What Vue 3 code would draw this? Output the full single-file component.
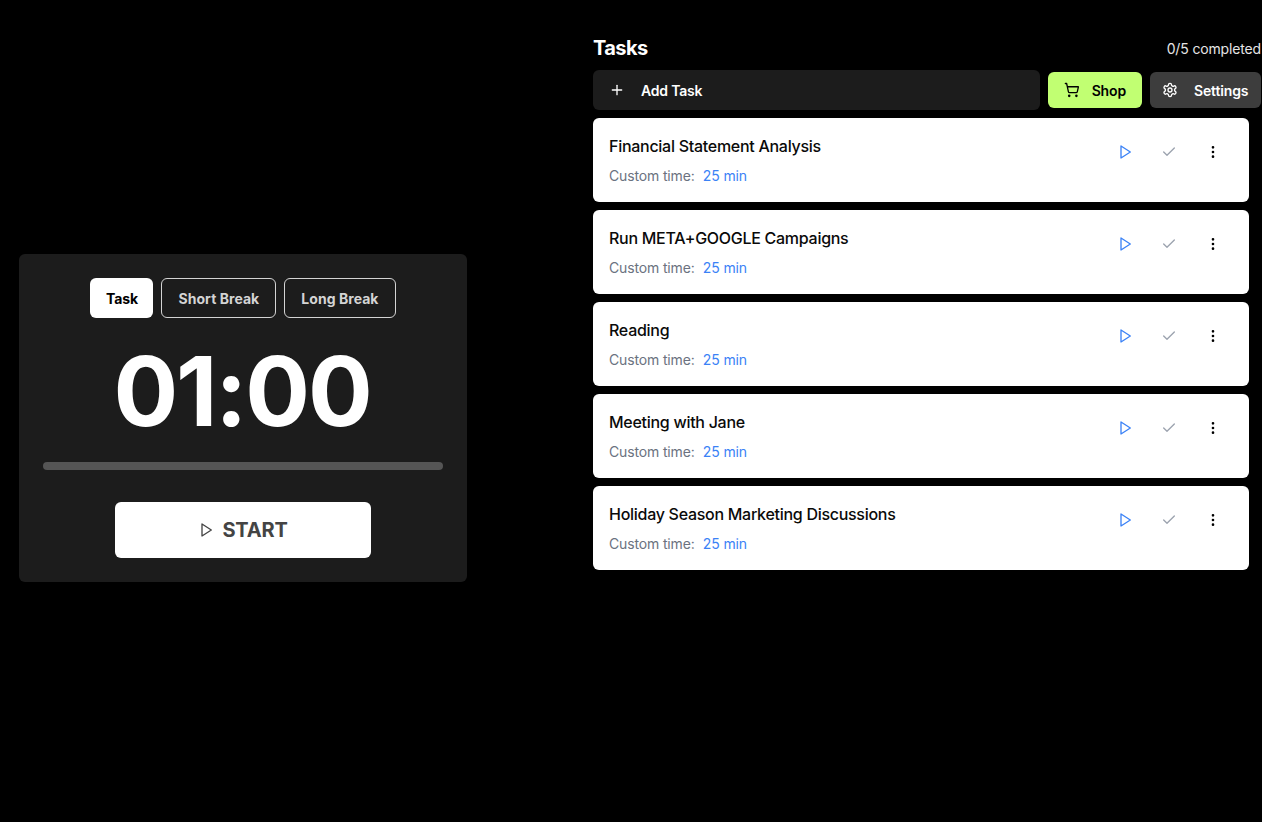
<script setup>
const modes = [
  { label: 'Task', active: true },
  { label: 'Short Break', active: false },
  { label: 'Long Break', active: false }
]

const tasks = [
  'Financial Statement Analysis',
  'Run META+GOOGLE Campaigns',
  'Reading',
  'Meeting with Jane',
  'Holiday Season Marketing Discussions'
]
</script>

<template>
  <div class="page">
    <section class="left">
      <div class="timer">
        <div class="modes">
          <button v-for="m in modes" :key="m.label" class="mode" :class="{ active: m.active }">
            {{ m.label }}
          </button>
        </div>
        <div class="time">01:00</div>
        <div class="progress"></div>
        <button class="start">
          <svg width="16" height="16" viewBox="0 0 24 24" fill="none" stroke="currentColor" stroke-width="2" stroke-linecap="round" stroke-linejoin="round">
            <polygon points="6 3 20 12 6 21 6 3" />
          </svg>
          START
        </button>
      </div>
    </section>

    <section class="right">
      <header class="head">
        <h2>Tasks</h2>
        <span class="count">0/5 completed</span>
      </header>

      <div class="toolbar">
        <button class="add">
          <svg width="16" height="16" viewBox="0 0 24 24" fill="none" stroke="currentColor" stroke-width="2" stroke-linecap="round">
            <path d="M5 12h14" />
            <path d="M12 5v14" />
          </svg>
          Add Task
        </button>
        <button class="shop">
          <svg width="16" height="16" viewBox="0 0 24 24" fill="none" stroke="currentColor" stroke-width="2" stroke-linecap="round" stroke-linejoin="round">
            <circle cx="8" cy="21" r="1" />
            <circle cx="19" cy="21" r="1" />
            <path d="M2.05 2.05h2l2.66 12.42a2 2 0 0 0 2 1.58h9.78a2 2 0 0 0 1.95-1.57l1.65-7.43H5.12" />
          </svg>
          Shop
        </button>
        <button class="settings">
          <svg width="16" height="16" viewBox="0 0 24 24" fill="none" stroke="currentColor" stroke-width="2" stroke-linecap="round" stroke-linejoin="round">
            <path d="M12.22 2h-.44a2 2 0 0 0-2 2v.18a2 2 0 0 1-1 1.73l-.43.25a2 2 0 0 1-2 0l-.15-.08a2 2 0 0 0-2.73.73l-.22.38a2 2 0 0 0 .73 2.73l.15.1a2 2 0 0 1 1 1.72v.51a2 2 0 0 1-1 1.74l-.15.09a2 2 0 0 0-.73 2.73l.22.38a2 2 0 0 0 2.73.73l.15-.08a2 2 0 0 1 2 0l.43.25a2 2 0 0 1 1 1.73V20a2 2 0 0 0 2 2h.44a2 2 0 0 0 2-2v-.18a2 2 0 0 1 1-1.73l.43-.25a2 2 0 0 1 2 0l.15.08a2 2 0 0 0 2.73-.73l.22-.39a2 2 0 0 0-.73-2.73l-.15-.08a2 2 0 0 1-1-1.74v-.5a2 2 0 0 1 1-1.74l.15-.09a2 2 0 0 0 .73-2.73l-.22-.38a2 2 0 0 0-2.73-.73l-.15.08a2 2 0 0 1-2 0l-.43-.25a2 2 0 0 1-1-1.73V4a2 2 0 0 0-2-2z" />
            <circle cx="12" cy="12" r="3" />
          </svg>
          Settings
        </button>
      </div>

      <ul class="list">
        <li v-for="t in tasks" :key="t" class="card">
          <div class="info">
            <div class="title">{{ t }}</div>
            <div class="meta">Custom time: <span class="mins">25 min</span></div>
          </div>
          <div class="actions">
            <span class="act play">
              <svg width="16" height="16" viewBox="0 0 24 24" fill="none" stroke="currentColor" stroke-width="2" stroke-linecap="round" stroke-linejoin="round">
                <polygon points="6 3 20 12 6 21 6 3" />
              </svg>
            </span>
            <span class="act check">
              <svg width="16" height="16" viewBox="0 0 24 24" fill="none" stroke="currentColor" stroke-width="2" stroke-linecap="round" stroke-linejoin="round">
                <path d="M20 6 9 17l-5-5" />
              </svg>
            </span>
            <span class="act more">
              <svg width="16" height="16" viewBox="0 0 24 24" fill="none" stroke="currentColor" stroke-width="2" stroke-linecap="round" stroke-linejoin="round">
                <circle cx="12" cy="12" r="1" />
                <circle cx="12" cy="5" r="1" />
                <circle cx="12" cy="19" r="1" />
              </svg>
            </span>
          </div>
        </li>
      </ul>
    </section>
  </div>
</template>

<style>
html,
body {
  background: #000;
  overflow: hidden;
}
</style>

<style scoped>
.page {
  display: flex;
  height: 822px;
  background: #000;
  font-family: Inter, "Liberation Sans", sans-serif;
  overflow: hidden;
}

button {
  font-family: inherit;
  border: none;
  cursor: pointer;
}

.left {
  width: 593px;
  flex-shrink: 0;
  padding: 254px 0 0 19px;
  box-sizing: border-box;
}

.timer {
  width: 448px;
  height: 328px;
  box-sizing: border-box;
  padding: 24px;
  background: #1c1c1c;
  border-radius: 6px;
  display: flex;
  flex-direction: column;
  align-items: center;
}

.modes {
  display: flex;
  gap: 8px;
}

.mode {
  height: 40px;
  padding: 0 16px;
  font-size: 14px;
  font-weight: 700;
  letter-spacing: 0.05px;
  color: #d4d4d4;
  background: transparent;
  border: 1px solid #d4d4d4;
  border-radius: 6px;
}

.mode.active {
  padding: 0 15.5px;
  letter-spacing: -0.1px;
  background: #fff;
  border: none;
  color: #000;
}

.time {
  margin: 18px 2px 16px 0;
  font-size: 96px;
  line-height: 110px;
  font-weight: 700;
  color: #fff;
  letter-spacing: -2.1px;
}

.progress {
  width: 400px;
  height: 8px;
  flex-shrink: 0;
  border-radius: 4px;
  background: #555;
}

.start {
  width: 256px;
  height: 56px;
  flex-shrink: 0;
  margin-top: 32px;
  display: flex;
  align-items: center;
  justify-content: center;
  gap: 8px;
  background: #fff;
  color: #444;
  border-radius: 6px;
  font-size: 20px;
  font-weight: 700;
  letter-spacing: -0.2px;
}

.right {
  flex: 1;
  padding-top: 36px;
}

.head {
  display: flex;
  justify-content: space-between;
  align-items: center;
  height: 24px;
}

.head h2 {
  margin: 0;
  font-size: 20px;
  font-weight: 700;
  letter-spacing: -0.6px;
  color: #fff;
}

.count {
  font-size: 14px;
  letter-spacing: -0.15px;
  color: #e5e5e5;
  margin-right: 1px;
}

.toolbar {
  display: flex;
  align-items: center;
  gap: 8px;
  margin-top: 10px;
}

.add {
  width: 447px;
  height: 40px;
  display: flex;
  align-items: center;
  gap: 16px;
  padding: 0 16px;
  background: #1c1c1c;
  color: #fff;
  border-radius: 6px;
  font-size: 14px;
  font-weight: 600;
  letter-spacing: -0.2px;
}

.shop,
.settings {
  height: 36px;
  display: flex;
  align-items: center;
  border-radius: 6px;
  font-size: 14px;
  font-weight: 600;
  letter-spacing: -0.15px;
}

.shop {
  width: 94px;
  padding: 0 16px;
  gap: 12px;
  background: #c1ff72;
  color: #000;
}

.settings {
  width: 111px;
  padding: 0 12px;
  gap: 16px;
  background: #3d3d3d;
  color: #fff;
  white-space: nowrap;
}

.list {
  list-style: none;
  margin: 8px 0 0;
  padding: 0;
  width: 656px;
  display: flex;
  flex-direction: column;
  gap: 8px;
}

.card {
  height: 84px;
  box-sizing: border-box;
  padding: 16px 20px 16px 16px;
  background: #fff;
  border-radius: 6px;
  display: flex;
  justify-content: space-between;
}

.title {
  font-size: 16px;
  line-height: 24px;
  font-weight: 500;
  letter-spacing: -0.28px;
  color: #0a0a0a;
}

.meta {
  margin-top: 8px;
  font-size: 14px;
  line-height: 20px;
  letter-spacing: -0.15px;
  color: #6b7280;
  white-space: pre-wrap;
}

.mins {
  margin-left: 4.5px;
  color: #3b82f6;
}

.actions {
  display: flex;
  align-items: flex-start;
  gap: 12px;
  margin-top: 2px;
}

.act {
  width: 32px;
  height: 32px;
  display: flex;
  align-items: center;
  justify-content: center;
}

.play {
  color: #3b82f6;
}

.check {
  color: #9ca3af;
}

.more {
  color: #000;
}
</style>
